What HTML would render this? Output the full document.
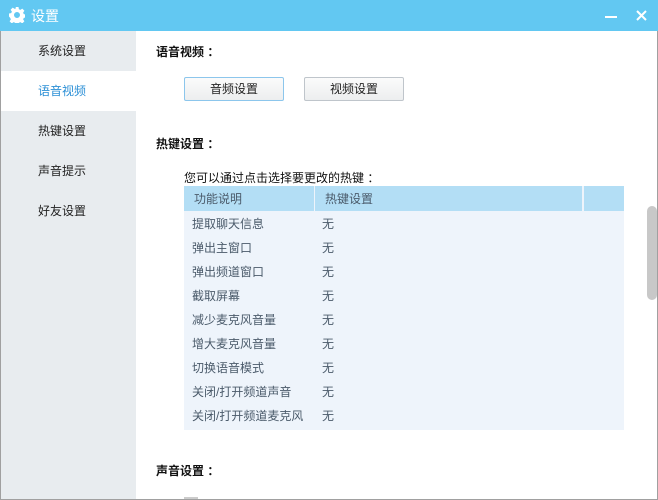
<!DOCTYPE html>
<html><head><meta charset="utf-8"><style>
*{margin:0;padding:0;box-sizing:border-box}
body{width:658px;height:500px;overflow:hidden;background:#fff;font-family:"Liberation Sans","Noto Sans CJK SC",sans-serif;font-size:12px;position:relative}
.win{position:absolute;left:0;top:0;width:658px;height:500px;border:1px solid #a0a0a0;border-top:1px solid #4aa8d8}
.title{position:absolute;left:0;top:0;width:658px;height:31px;background:#62c8f2}
.title .t{position:absolute;left:31px;top:6px;color:#fff;font-size:14px}
.side{position:absolute;left:1px;top:31px;width:135px;height:468px;background:#e8ecef}
.side div{height:40px;line-height:40px;padding-left:37px;color:#222;font-size:12px}
.side .sel{background:#fff;color:#2b8fd6}
.abs{position:absolute}
.h{font-weight:bold;color:#111;font-size:12px}
.btn{position:absolute;top:77px;height:24px;width:100px;border:1px solid #bfc5cb;border-radius:2px;background:linear-gradient(#fbfbfb,#eceeef);text-align:center;line-height:22px;color:#222}
.tbl{position:absolute;left:184px;top:186px;width:440px;height:244px;background:#eef4fb}
.hd{position:absolute;top:0;height:25px;background:#b3def5;color:#4a5a6a;line-height:26px}
.row{position:absolute;left:8px;color:#4a5a6a;height:24px;line-height:26px}
.row span{position:absolute;left:130px}
</style></head><body>
<div class="win"></div>
<div class="title">
<svg class="abs" style="left:9px;top:7px" width="16" height="16" viewBox="0 0 16 16"><path fill="#fff" d="M6.5 0h3l.4 2.2 1.5.7 1.9-1.3 2.1 2.1-1.3 1.9.7 1.5 2.2.4v3l-2.2.4-.7 1.5 1.3 1.9-2.1 2.1-1.9-1.3-1.5.7-.4 2.2h-3l-.4-2.2-1.5-.7-1.9 1.3-2.1-2.1 1.3-1.9-.7-1.5L0 9.5v-3l2.2-.4.7-1.5L1.6 2.7 3.7.6l1.9 1.3 1.5-.7zM8 5a3 3 0 100 6 3 3 0 000-6z"/></svg>
<div class="t">设置</div>
<div class="abs" style="left:605px;top:16px;width:12px;height:2px;background:#fff"></div>
<svg class="abs" style="left:636px;top:10px" width="11" height="11" viewBox="0 0 11 11"><path d="M1 1L10 10M10 1L1 10" stroke="#fff" stroke-width="2"/></svg>
</div>
<div class="side"><div>系统设置</div><div class="sel">语音视频</div><div>热键设置</div><div>声音提示</div><div>好友设置</div></div>
<div class="abs h" style="left:156px;top:43px">语音视频 ：</div>
<div class="btn" style="left:184px;border-color:#8cc6ec">音频设置</div>
<div class="btn" style="left:304px">视频设置</div>
<div class="abs h" style="left:156px;top:135px">热键设置 ：</div>
<div class="abs" style="left:184px;top:169px;color:#111">您可以通过点击选择要更改的热键 ：</div>
<div class="tbl">
<div class="hd" style="left:0;width:130px;padding-left:10px">功能说明</div>
<div class="hd" style="left:131px;width:267px;padding-left:10px">热键设置</div>
<div class="hd" style="left:400px;width:40px"></div>
<div class="row" style="top:25px">提取聊天信息<span>无</span></div>
<div class="row" style="top:49px">弹出主窗口<span>无</span></div>
<div class="row" style="top:73px">弹出频道窗口<span>无</span></div>
<div class="row" style="top:97px">截取屏幕<span>无</span></div>
<div class="row" style="top:121px">减少麦克风音量<span>无</span></div>
<div class="row" style="top:145px">增大麦克风音量<span>无</span></div>
<div class="row" style="top:169px">切换语音模式<span>无</span></div>
<div class="row" style="top:193px">关闭/打开频道声音<span>无</span></div>
<div class="row" style="top:217px">关闭/打开频道麦克风<span>无</span></div>
</div>
<div class="abs h" style="left:156px;top:462px">声音设置 ：</div>
<div class="abs" style="left:184px;top:497px;width:14px;height:2px;background:#ccc"></div>
<div class="abs" style="left:647px;top:206px;width:10px;height:94px;border-radius:5px;background:#c8c8c8"></div>
</body></html>
